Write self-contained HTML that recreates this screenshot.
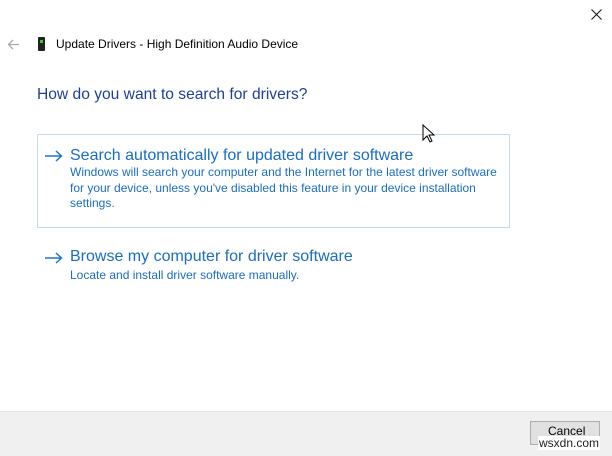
<!DOCTYPE html>
<html><head><meta charset="utf-8"><style>
body{margin:0;width:612px;height:455px;background:#fff;position:relative;overflow:hidden;font-family:"Liberation Sans",sans-serif}
.a{position:absolute;white-space:nowrap}
</style></head><body>
<svg class="a" style="left:591px;top:9px" width="11" height="11"><path d="M0.5 0.5L10.5 10.5M10.5 0.5L0.5 10.5" stroke="#111" stroke-width="1"/></svg>
<svg class="a" style="left:7px;top:39px" width="13" height="11"><path d="M12 5.5H1.5M6 1L1.5 5.5L6 10" stroke="#aaa" stroke-width="1.3" fill="none"/></svg>
<div class="a" style="left:38px;top:37px;width:7px;height:14px;background:#222;border-radius:1px"></div>
<div class="a" style="left:40px;top:40px;width:3px;height:3px;background:#3c3"></div>
<div class="a" style="left:56px;top:37px;font-size:12px;color:#000">Update Drivers - High Definition Audio Device</div>
<div class="a" style="left:37px;top:86px;font-size:15.6px;color:#1e3f96">How do you want to search for drivers?</div>
<div class="a" style="left:37px;top:134px;width:471px;height:92px;border:1px solid #c5dbe8"></div>
<svg class="a" style="left:45px;top:150px" width="18" height="12"><path d="M0 6H16.5M11 1L16.5 6L11 11" stroke="#1a77c9" stroke-width="1.5" fill="none"/></svg>
<div class="a" style="left:70px;top:147px;font-size:16px;color:#1a6dc0">Search automatically for updated driver software</div>
<div class="a" style="left:70px;top:165px;font-size:12px;line-height:15.5px;color:#1a6dc0">Windows will search your computer and the Internet for the latest driver software<br>for your device, unless you've disabled this feature in your device installation<br>settings.</div>
<svg class="a" style="left:45px;top:252px" width="18" height="12"><path d="M0 6H16.5M11 1L16.5 6L11 11" stroke="#1a77c9" stroke-width="1.5" fill="none"/></svg>
<div class="a" style="left:70px;top:248px;font-size:16px;color:#1a6dc0">Browse my computer for driver software</div>
<div class="a" style="left:70px;top:268px;font-size:12px;color:#1a6dc0">Locate and install driver software manually.</div>
<svg class="a" style="left:422px;top:124px" width="13" height="20"><path d="M1 1V16L5 12L8 18L10 17L7 11H12Z" fill="#fff" stroke="#000" stroke-width="1"/></svg>
<div class="a" style="left:0;top:411px;width:612px;height:44px;background:#f0f0f0;border-top:1px solid #e3e3e3"></div>
<div class="a" style="left:530px;top:421px;width:68px;height:22px;background:#e1e1e1;border:1px solid #adadad"></div>
<div class="a" style="left:548px;top:424px;font-size:12px;color:#000">Cancel</div>
<div class="a" style="left:538px;top:436px;font-size:12px;color:#222;background:#fff;padding:0 1px">wsxdn.com</div>
</body></html>
